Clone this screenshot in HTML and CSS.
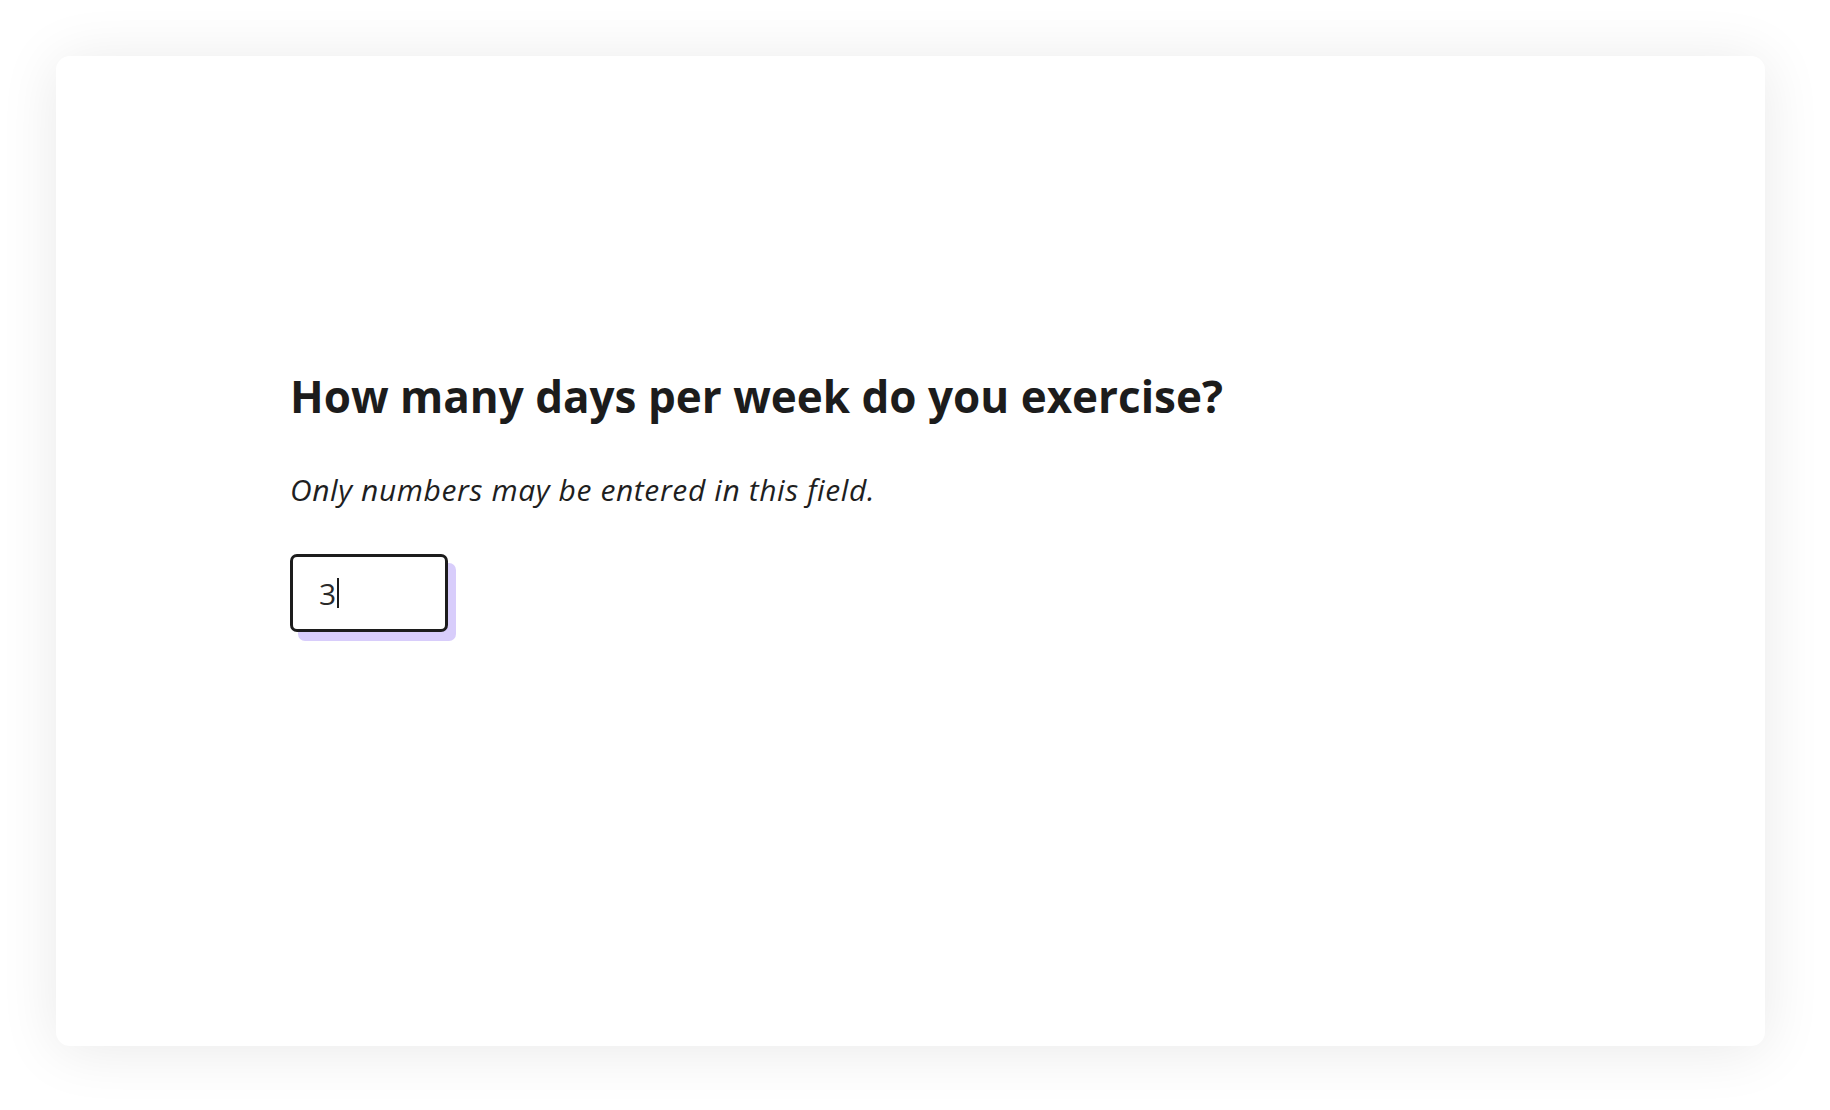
FILE: index.html
```html
<!DOCTYPE html>
<html lang="en">
<head>
<meta charset="utf-8">
<title>Question</title>
<link rel="stylesheet" href="styles.css">
</head>
<body>
<main class="card">
  <section class="question">
    <h1 class="title">How many days per week do you exercise?</h1>
    <p class="hint">Only numbers may be entered in this field.</p>
    <div class="field">
      <div class="input"><span class="value">3</span><span class="caret"></span></div>
    </div>
  </section>
</main>
</body>
</html>
```

FILE: styles.css
```css
html, body {
  margin: 0;
  padding: 0;
  background: #ffffff;
}
body {
  padding: 56px 65px 64px 56px;
  font-family: "Open Sans", "Noto Sans", sans-serif;
  color: #1f1f1f;
}
.card {
  height: 990px;
  box-sizing: border-box;
  background: #ffffff;
  border-radius: 14px;
  box-shadow: 0 4px 60px rgba(0, 0, 0, 0.09);
  padding: 313px 0 0 234px;
}
.title {
  margin: 0;
  font-size: 44px;
  font-weight: 700;
  line-height: 1.25;
  color: #1c1c1c;
}
.hint {
  margin: 46px 0 0;
  font-size: 30px;
  font-style: italic;
  letter-spacing: 0.6px;
  line-height: 1.3;
  color: #1f1f1f;
}
.field {
  margin-top: 45px;
}
.input {
  width: 158px;
  height: 78px;
  box-sizing: border-box;
  border: 3px solid #1c1c1c;
  border-radius: 7px;
  background: #fff;
  box-shadow: 8px 9px 0 #d8cdfb;
  display: flex;
  align-items: center;
  padding-left: 26px;
  font-size: 30px;
  color: #2a2a2a;
}
.caret {
  display: inline-block;
  width: 2px;
  height: 30px;
  background: #1c1c1c;
  margin-left: 1px;
}
```
